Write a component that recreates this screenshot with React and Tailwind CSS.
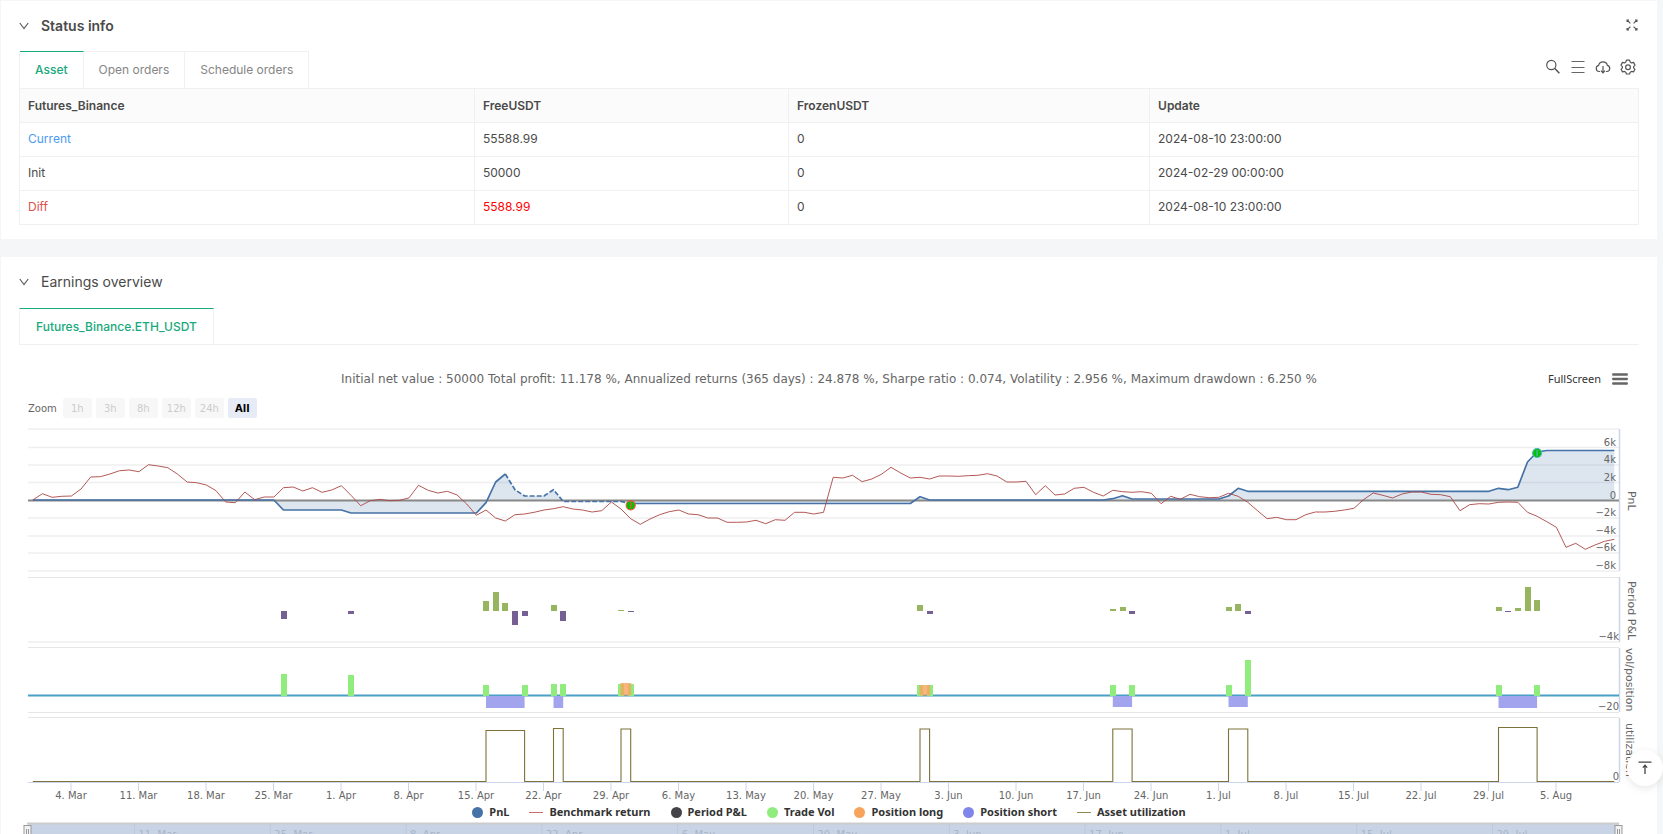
import { useState } from "react";

const rows = [
  { name: "Current", free: "55588.99", frozen: "0", update: "2024-08-10 23:00:00", nameColor: "text-[#4c9bf0]", freeColor: "" },
  { name: "Init", free: "50000", frozen: "0", update: "2024-02-29 00:00:00", nameColor: "", freeColor: "" },
  { name: "Diff", free: "5588.99", frozen: "0", update: "2024-08-10 23:00:00", nameColor: "text-[#dd524c]", freeColor: "text-[#ff0000]" },
];

const zoomRanges = ["1h", "3h", "8h", "12h", "24h"];

// one point per day
const START_X = 32.8;
const DAY = 9.643;
const ZERO = 500.5;
const dayX = (i) => Math.round((START_X + i * DAY) * 10) / 10;

const benchmark = [
  500, 493.7, 497.3, 496.3, 496, 489, 477, 476.7, 474, 470.7, 470, 471.7, 464.7, 466, 467.7, 474, 482, 482.7, 485, 490.7,
  502, 502.7, 492, 499.7, 497, 497, 487.7, 487, 491, 487.7, 492.3, 490, 485.7, 495.3, 505.7, 500.7, 499.3, 500.7, 500.3, 498,
  485.3, 490.3, 493, 491.3, 495, 504, 515.3, 510, 518, 521, 514.7, 514, 512.3, 510, 508.7, 506.7, 509, 510, 512, 510.7,
  502, 509, 518.7, 524.3, 519, 514.7, 511.7, 510, 514, 514.7, 518, 518, 522.3, 522.3, 522, 520.3, 523.7, 519.7, 520.3, 512.3,
  512.3, 514, 512.3, 477.3, 478, 475.3, 481.7, 479, 474.3, 467.3, 473, 478, 477.3, 479, 476, 476, 476.3, 475.7, 475.3, 473.7,
  476, 482, 482, 481.3, 494.7, 485.7, 495, 494, 488.3, 487.3, 492.3, 496, 490.3, 491.7, 492.3, 491.7, 493.3, 503.7, 496.3, 499.3,
  494.3, 496.7, 497.7, 497.3, 493.3, 496.3, 502.3, 510.7, 518.7, 517.3, 519.7, 519.7, 514.7, 512, 512, 511.3, 510, 508.3, 499.7, 493,
  495.3, 498, 494, 492, 492, 494.3, 494.7, 496.7, 510.7, 504.7, 503.7, 504, 502.3, 502, 502.3, 512.3, 516.3, 521.7, 527.3, 547.3,
  543.3, 549.3, 545, 541.3, 539.3,
];

// [day, y]
const pnlStart = [[0, 500], [25, 500], [26, 510], [32, 510], [33, 513], [46, 513], [47, 502.7], [48, 482], [49, 474]];
const pnlDashed = [[49, 474], [50, 489.7], [51, 496], [53, 496], [54, 489.7], [55, 501.5], [61, 501.5], [62, 503.5]];
const pnlEnd = [
  [62, 503.5], [91, 503.5], [92, 496.7], [93, 500], [111, 500], [112, 498.7], [113, 495.7], [114, 499], [123, 499], [124, 496],
  [125, 488.3], [126, 491.3], [151, 491.3], [152, 488.3], [153, 489.7], [154, 487.3], [155, 462], [156, 452], [157, 450.5], [164, 450.5],
];

const toPoints = (pts) => pts.map(([i, y]) => `${dayX(i)},${y}`).join(" ");
const benchmarkPoints = toPoints(benchmark.map((y, i) => [i, y]));
const areaPoints = toPoints([[0, ZERO], ...pnlStart, ...pnlDashed, ...pnlEnd, [164, ZERO]]);

// [day, height], negative hangs below the base line
const periodBars = [
  [26, -8], [33, -3], [47, 10], [48, 19], [49, 8], [50, -14], [51, -5], [54, 6], [55, -10], [61, 1], [62, -1], [92, 6], [93, -3],
  [112, 2], [113, 4], [114, -3], [124, 4], [125, 7], [126, -3], [152, 4], [153, -1], [154, 3], [155, 24], [156, 11],
];
const volBars = [
  [26, 674], [33, 675], [47, 685], [51, 685], [54, 684], [55, 684], [61, 684], [62, 684], [92, 685], [93, 685], [112, 685],
  [114, 685], [124, 685], [126, 660], [152, 685], [156, 685],
];
const shorts = [[47, 51, 708], [54, 55, 708], [112, 114, 707], [124, 126, 707], [152, 156, 708]];
const longs = [[61, 62, 683], [92, 93, 685]];
const used = [[47, 51, 730.5], [54, 55, 728.5], [61, 62, 729], [92, 93, 729], [112, 114, 729], [124, 126, 729], [152, 156, 727.5]];

const utilPath =
  `M${dayX(0)} 781.5` +
  used.map(([a, b, y]) => `H${dayX(a)}V${y}H${dayX(b)}V781.5`).join("") +
  `H${dayX(164)}`;

const weeks = [
  "4. Mar", "11. Mar", "18. Mar", "25. Mar", "1. Apr", "8. Apr", "15. Apr", "22. Apr", "29. Apr", "6. May", "13. May", "20. May",
  "27. May", "3. Jun", "10. Jun", "17. Jun", "24. Jun", "1. Jul", "8. Jul", "15. Jul", "22. Jul", "29. Jul", "5. Aug",
];
const gridY = [429, 447.5, 465, 482.5, 518, 536, 553, 571];
const paneY = [577.5, 642, 647.5, 712.5, 717.5];
const yLabels = [["6k", 446], ["4k", 463], ["2k", 481], ["0", 499], ["−2k", 516], ["−4k", 534], ["−6k", 551], ["−8k", 569]];

const navLabels = ["11. Mar", "25. Mar", "8. Apr", "22. Apr", "6. May", "20. May", "3. Jun", "17. Jun", "1. Jul", "15. Jul", "29. Jul"];

const legend = [
  { label: "PnL", color: "bg-[#4572a7]" },
  { label: "Benchmark return", color: "bg-[#c86f6d]", line: true },
  { label: "Period P&L", color: "bg-[#434348]" },
  { label: "Trade Vol", color: "bg-[#90ed7d]" },
  { label: "Position long", color: "bg-[#f7a35c]" },
  { label: "Position short", color: "bg-[#8085e9]" },
  { label: "Asset utilization", color: "bg-[#8f8650]", line: true },
];

function Chevron() {
  return (
    <svg viewBox="0 0 10 10" className="size-[10px]" fill="none" stroke="#555" strokeWidth="1.1">
      <path d="M0.8 2 L5 7.6 L9.2 2" />
    </svg>
  );
}

function SectionTitle({ children, className }) {
  return (
    <h2 className={`flex items-center gap-3 text-[14px] leading-5 text-[#4a4a4a] ${className}`}>
      <button type="button" aria-label="Collapse"><Chevron /></button>
      {children}
    </h2>
  );
}

function Marker({ x, y, ring }) {
  return (
    <g>
      <circle cx={x} cy={y} r="4.5" fill="#00c400" stroke={ring} strokeWidth="1.2" />
      <path d={`M${x} ${y - 3}V${y + 3}`} stroke={ring} strokeWidth="1.2" />
    </g>
  );
}

function Chart() {
  return (
    <svg viewBox="19 418 1620 384" className="block h-auto w-full" fontFamily='"DejaVu Sans", sans-serif'>
      {/* grid */}
      {gridY.map((y) => (
        <path key={y} d={`M28 ${y}H1619`} stroke="#efeff1" strokeWidth="1.5" />
      ))}
      {paneY.map((y) => (
        <path key={y} d={`M28 ${y}H1619`} stroke="#e6e6e6" />
      ))}
      <path d="M1619.5 429V571M1619.5 577V642M1619.5 648V712M1619.5 718V782" stroke="#ccd6eb" strokeWidth="1.5" />

      {/* pnl */}
      <polygon points={areaPoints} fill="#4572a7" fillOpacity="0.18" />
      <path d={`M28 ${ZERO}H1619`} stroke="#888888" strokeWidth="2" />
      <g fill="none" stroke="#4572a7" strokeWidth="1.7" strokeLinejoin="round">
        <polyline points={toPoints(pnlStart)} />
        <polyline points={toPoints(pnlDashed)} strokeDasharray="5 2" />
        <polyline points={toPoints(pnlEnd)} />
      </g>
      <polyline points={benchmarkPoints} fill="none" stroke="#aa4643" strokeWidth="0.9" strokeLinejoin="round" />
      <Marker x={dayX(62)} y={505.3} ring="#f0523c" />
      <Marker x={dayX(156)} y={453} ring="#5bb0c8" />

      {/* period p&l */}
      {periodBars.map(([i, h]) => (
        <rect
          key={i}
          x={Math.round(dayX(i)) - 3}
          y={h > 0 ? 611 - h : 611}
          width="6"
          height={Math.abs(h)}
          fill={h > 0 ? "#97b560" : "#765f92"}
        />
      ))}

      {/* volume and position */}
      <path d="M28 695.5H1619" stroke="#4a9fc6" strokeWidth="2" />
      {shorts.map(([a, b, y]) => (
        <rect key={a} x={dayX(a)} y="696" width={dayX(b) - dayX(a)} height={y - 696} fill="#a2a5ee" />
      ))}
      {volBars.map(([i, y]) => (
        <rect key={i} x={Math.round(dayX(i)) - 3} y={y} width="6" height={696 - y} fill="#90ed7d" />
      ))}
      {longs.map(([a, b, y]) => (
        <rect key={a} x={dayX(a) - 0.5} y={y} width="10.6" height={695.5 - y} fill="#f7a35c" fillOpacity="0.8" />
      ))}

      {/* utilization */}
      <path d="M28 782.5H1619" stroke="#ccd6eb" />
      <path d={utilPath} fill="none" stroke="#7d733a" strokeWidth="1.1" />

      {weeks.map((label, i) => (
        <g key={label}>
          <path d={`M${71 + i * 67.5} 782V791`} stroke="#ccd6eb" />
          <text x={71 + i * 67.5} y="799" fontSize="10" fill="#666" textAnchor="middle">{label}</text>
        </g>
      ))}

      <g fontSize="10" fill="#666" textAnchor="end">
        {yLabels.map(([label, y]) => (
          <text key={label} x="1616" y={y}>{label}</text>
        ))}
        <text x="1619" y="640">−4k</text>
        <text x="1619" y="710">−20</text>
        <text x="1619" y="780">0</text>
      </g>
      <g fontSize="11" fill="#666">
        <text transform="translate(1628 491) rotate(90)">PnL</text>
        <text transform="translate(1628 581) rotate(90)">Period P&amp;L</text>
        <text transform="translate(1626 648) rotate(90)">vol/position</text>
        <text transform="translate(1626 723) rotate(90)">utilization</text>
      </g>
    </svg>
  );
}

function Navigator() {
  return (
    <svg viewBox="19 822 1620 48" className="block h-auto w-full" fontFamily='"DejaVu Sans", sans-serif'>
      <rect x="28" y="824" width="1591" height="40" fill="#c8d4e6" />
      <path d="M27 823.5H1619" stroke="#cccccc" strokeWidth="2" />
      {navLabels.map((label, i) => (
        <g key={label}>
          <path d={`M${134.5 + i * 135.8} 824V864`} stroke="#bcc8db" />
          <text x={138.5 + i * 135.8} y="838" fontSize="10" fill="#a9b5c8">{label}</text>
        </g>
      ))}
      {[27.5, 1618.5].map((x) => (
        <g key={x}>
          <rect x={x - 3.5} y="825.5" width="7" height="14" fill="#f2f2f2" stroke="#999" />
          <path d={`M${x - 1} 829V837M${x + 1} 829V837`} stroke="#999" />
        </g>
      ))}
    </svg>
  );
}

export default function App() {
  const [tab, setTab] = useState("Asset");

  return (
    <div className="relative h-screen overflow-hidden bg-[#f4f6f8] pt-px pr-[6px] pl-px font-['Inter','Liberation_Sans',sans-serif] text-[#4a4a4a]">
      {/* STATUS */}
      <section className="bg-white px-[18px] pt-[15px] pb-[14px]">
        <div className="flex items-center justify-between">
          <SectionTitle className="font-semibold">Status info</SectionTitle>
          <button type="button" aria-label="Exit full screen" className="pr-px pb-[3px]">
            <svg viewBox="0 0 12 12" className="size-3" fill="none" stroke="#555" strokeWidth="1.1">
              <path d="M1 1L4.4 4.4M1 3V1H3M11 1L7.6 4.4M11 3V1H9M1 11L4.4 7.6M1 9V11H3M11 11L7.6 7.6M11 9V11H9" />
            </svg>
          </button>
        </div>

        <div className="mt-[15px] flex items-start justify-between">
          <div role="tablist" className="flex h-[37px] border-l border-[#f0f0f0] text-[12px]">
            {["Asset", "Open orders", "Schedule orders"].map((name) => (
              <button
                key={name}
                type="button"
                role="tab"
                aria-selected={tab === name}
                onClick={() => setTab(name)}
                className={`border-t border-r border-r-[#f0f0f0] px-[15px] ${
                  tab === name ? "border-t-[#18a97c] font-medium text-[#18a97c]" : "border-t-[#f0f0f0] text-[#858585]"
                }`}
              >
                {name}
              </button>
            ))}
          </div>

          <div className="mt-2 flex items-center gap-[9px] pr-[3px]">
            <button type="button" aria-label="Search">
              <svg viewBox="0 0 16 16" className="size-4" fill="none" stroke="#555" strokeWidth="1.2">
                <circle cx="6.3" cy="6" r="4.6" />
                <path d="M9.6 9.2L14.4 14.2" strokeWidth="1.5" />
              </svg>
            </button>
            <button type="button" aria-label="List">
              <svg viewBox="0 0 16 16" className="size-4" fill="none" stroke="#666" strokeWidth="1.2">
                <path d="M1.5 2.5H14.5M1.5 8.5H14.5M1.5 13.5H14.5" />
              </svg>
            </button>
            <button type="button" aria-label="Download">
              <svg viewBox="0 0 16 16" className="size-4" fill="none" stroke="#555" strokeWidth="1.2">
                <path d="M5 12.5H4.2A3.1 3.1 0 0 1 3.6 6.4A4.5 4.5 0 0 1 12.4 6.4A3.1 3.1 0 0 1 11.8 12.5H11" />
                <path d="M8 7V13.6M5.9 11.6L8 13.8L10.1 11.6" />
              </svg>
            </button>
            <button type="button" aria-label="Settings">
              <svg viewBox="0 0 16 16" className="size-4" fill="none" stroke="#555" strokeWidth="1.2" strokeLinejoin="round">
                <path d="M6.4 1.2H9.6L10.2 3.1L11.5 3.9L13.5 3.4L15 6.1L13.6 7.6V8.8L15 10.3L13.5 12.9L11.5 12.4L10.2 13.2L9.6 15H6.4L5.8 13.2L4.5 12.4L2.5 12.9L1 10.3L2.4 8.8V7.6L1 6.1L2.5 3.4L4.5 3.9L5.8 3.1Z" />
                <circle cx="8" cy="8.2" r="2.4" />
              </svg>
            </button>
          </div>
        </div>

        <table className="w-full table-fixed border-collapse text-left text-[12px] leading-4">
          <colgroup>
            <col className="w-[28.1%]" />
            <col className="w-[19.4%]" />
            <col className="w-[22.3%]" />
            <col />
          </colgroup>
          <thead>
            <tr className="h-[34px] bg-[#fbfbfb]">
              {["Futures_Binance", "FreeUSDT", "FrozenUSDT", "Update"].map((h) => (
                <th key={h} scope="col" className="border border-[#f0f0f0] px-2 font-semibold">{h}</th>
              ))}
            </tr>
          </thead>
          <tbody>
            {rows.map((r) => (
              <tr key={r.name} className="h-[34px]">
                <td className={`border border-[#f0f0f0] px-2 pb-px ${r.nameColor}`}>{r.name}</td>
                <td className={`border border-[#f0f0f0] px-2 pb-px ${r.freeColor}`}>{r.free}</td>
                <td className="border border-[#f0f0f0] px-2 pb-px">{r.frozen}</td>
                <td className="border border-[#f0f0f0] px-2 pb-px">{r.update}</td>
              </tr>
            ))}
          </tbody>
        </table>
      </section>

      {/* EARNINGS */}
      <section className="mt-[18px] bg-white px-[18px] pt-[15px] pb-4">
        <SectionTitle className="">Earnings overview</SectionTitle>

        <div role="tablist" className="mt-4 flex h-[37px] border-b border-[#f0f0f0] text-[12px]">
          <button
            type="button"
            role="tab"
            aria-selected="true"
            className="border-x border-t border-x-[#f0f0f0] border-t-[#18a97c] px-4 font-medium text-[#18a97c]"
          >
            Futures_Binance.ETH_USDT
          </button>
        </div>

        <div className="font-['DejaVu_Sans',sans-serif]">
          <div className="relative mt-6 flex h-5 items-center justify-center text-[12px] text-[#666]">
            <p className="whitespace-nowrap">
              Initial net value : 50000 Total profit: 11.178 %, Annualized returns (365 days) : 24.878 %, Sharpe ratio : 0.074, Volatility : 2.956 %, Maximum drawdown : 6.250 %
            </p>
            <div className="absolute right-[11px] flex items-center gap-[11px]">
              <button type="button" className="font-['Noto_Sans',sans-serif] text-[11px] text-[#333]">FullScreen</button>
              <button type="button" aria-label="Chart menu">
                <svg viewBox="0 0 16 12" className="h-3 w-4" stroke="#666" strokeWidth="2.4" strokeLinecap="round">
                  <path d="M1.2 1.5H14.8M1.2 6H14.8M1.2 10.5H14.8" />
                </svg>
              </button>
            </div>
          </div>

          <div className="mt-[9px] flex h-5 items-center gap-1 pl-[9px] text-[10px]">
            <span className="mr-0.5 text-[#666]">Zoom</span>
            {zoomRanges.map((z) => (
              <button key={z} type="button" disabled className="h-5 w-[29px] rounded-xs bg-[#f7f7f7] text-[#ccc]">{z}</button>
            ))}
            <button type="button" className="h-5 w-[29px] rounded-xs bg-[#e6ebf5] font-bold text-black">All</button>
          </div>

          <Chart />

          <div className="flex h-5 items-center justify-center gap-5 font-['Noto_Sans',sans-serif] text-[11px] font-bold text-[#333]">
            {legend.map((item) => (
              <button key={item.label} type="button" className="flex items-center gap-[6px] whitespace-nowrap">
                <span className={item.line ? `h-px w-[14px] ${item.color}` : `size-[11px] rounded-full ${item.color}`} />
                {item.label}
              </button>
            ))}
          </div>

          <Navigator />
        </div>
      </section>

      <button
        type="button"
        aria-label="Back to top"
        className="absolute right-0 bottom-12 flex size-9 items-center justify-center rounded-full bg-white shadow-[0_2px_8px_rgba(0,0,0,0.1)]"
      >
        <svg viewBox="0 0 14 14" className="size-[14px]" fill="none" stroke="#444" strokeWidth="1.3">
          <path d="M0.5 1.2H13.5M7 13V4.5M4.8 6.6L7 4.3L9.2 6.6" />
        </svg>
      </button>
    </div>
  );
}
